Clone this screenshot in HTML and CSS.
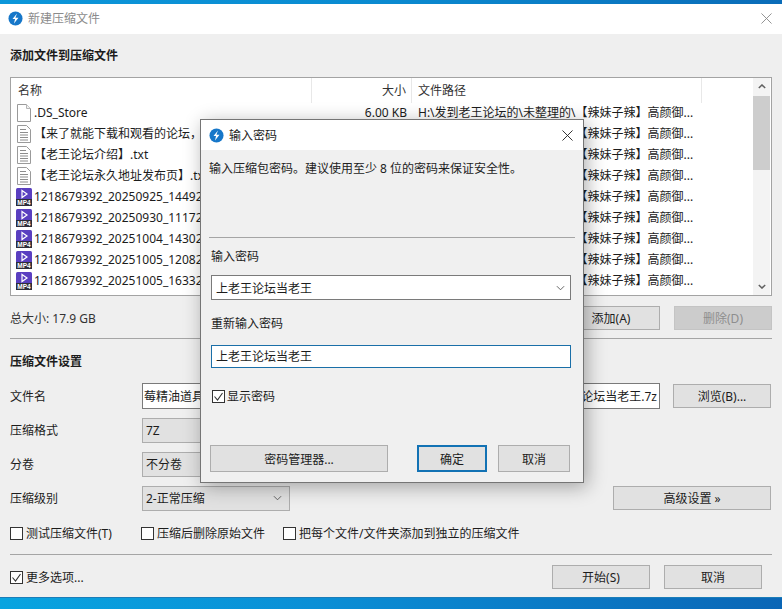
FILE: index.html
```html
<!DOCTYPE html>
<html lang="zh-CN">
<head>
<meta charset="utf-8">
<title>新建压缩文件</title>
<link rel="stylesheet" href="styles.css">
</head>
<body>
<svg class="defs" aria-hidden="true">
  <symbol id="logo" viewBox="0 0 16 16">
    <circle cx="8" cy="8" r="7.5" fill="#1677c9"/>
    <path d="M9.6 2.6 4.8 8.6h2.7l-1.1 4.8 4.8-6.1H7.9z" fill="#fff"/>
  </symbol>
  <symbol id="file" viewBox="0 0 14 18">
    <path d="M.5.5h9l4 4v13H.5z" fill="#fff" stroke="#9a9a9a"/>
    <path d="M9.5.5v4h4" fill="#f2f2f2" stroke="#b5b5b5"/>
  </symbol>
  <symbol id="txt" viewBox="0 0 14 18">
    <path d="M.5.5h9l4 4v13H.5z" fill="#fff" stroke="#9a9a9a"/>
    <path d="M3 4.5h6M3 7.5h8M3 10h8M3 12.500h8M3 15h8" stroke="#8d8d8d" fill="none"/>
  </symbol>
  <symbol id="mp4" viewBox="0 0 16 18">
    <rect width="16" height="12" rx="1.500" fill="#5a3fc0"/>
    <path d="M6 2.500 11 6 6 9.500z" fill="none" stroke="#fff" stroke-width="1.200"/>
    <rect y="11" width="16" height="7" fill="#2e2e3a"/>
    <text x="8" y="17" text-anchor="middle" class="mp4-label">MP4</text>
  </symbol>
  <symbol id="chev" viewBox="0 0 10 6">
    <path d="M1 1l4 4 4-4" fill="none" stroke="#555" stroke-width="1"/>
  </symbol>
</svg>

<div class="screen">
  <div class="desk-top"></div>
  <main class="window">
    <header class="titlebar">
      <svg class="logo"><use href="#logo"/></svg>
      <span class="title-main">新建压缩文件</span>
      <svg class="close close-main" viewBox="0 0 12 12"><path d="M.5.500l11 11M11.500.500l-11 11"/></svg>
    </header>
    <div class="content">
      <h2 class="heading h-add">添加文件到压缩文件</h2>
      <section class="list">
        <div class="list-main">
          <div class="list-head">
            <span class="col-name">名称</span>
            <span class="col-size">大小</span>
            <span class="col-path">文件路径</span>
            <span class="col-end"></span>
          </div>
          <div class="row"><span class="col-name"><svg class="ico"><use href="#file"/></svg>.DS_Store</span><span class="col-size">6.00 KB</span><span class="col-path">H:\发到老王论坛的\未整理的\【辣妹子辣】高颜御...</span></div>
          <div class="row"><span class="col-name"><svg class="ico"><use href="#txt"/></svg>【来了就能下载和观看的论坛，</span><span class="col-size"></span><span class="col-path">H:\发到老王论坛的\未整理的\【辣妹子辣】高颜御...</span></div>
          <div class="row"><span class="col-name"><svg class="ico"><use href="#txt"/></svg>【老王论坛介绍】.txt</span><span class="col-size"></span><span class="col-path">H:\发到老王论坛的\未整理的\【辣妹子辣】高颜御...</span></div>
          <div class="row"><span class="col-name"><svg class="ico"><use href="#txt"/></svg>【老王论坛永久地址发布页】.txt</span><span class="col-size"></span><span class="col-path">H:\发到老王论坛的\未整理的\【辣妹子辣】高颜御...</span></div>
          <div class="row"><span class="col-name"><svg class="ico"><use href="#mp4"/></svg>1218679392_20250925_144926</span><span class="col-size"></span><span class="col-path">H:\发到老王论坛的\未整理的\【辣妹子辣】高颜御...</span></div>
          <div class="row"><span class="col-name"><svg class="ico"><use href="#mp4"/></svg>1218679392_20250930_111726</span><span class="col-size"></span><span class="col-path">H:\发到老王论坛的\未整理的\【辣妹子辣】高颜御...</span></div>
          <div class="row"><span class="col-name"><svg class="ico"><use href="#mp4"/></svg>1218679392_20251004_143026</span><span class="col-size"></span><span class="col-path">H:\发到老王论坛的\未整理的\【辣妹子辣】高颜御...</span></div>
          <div class="row"><span class="col-name"><svg class="ico"><use href="#mp4"/></svg>1218679392_20251005_120826</span><span class="col-size"></span><span class="col-path">H:\发到老王论坛的\未整理的\【辣妹子辣】高颜御...</span></div>
          <div class="row"><span class="col-name"><svg class="ico"><use href="#mp4"/></svg>1218679392_20251005_163326</span><span class="col-size"></span><span class="col-path">H:\发到老王论坛的\未整理的\【辣妹子辣】高颜御...</span></div>
        </div>
        <div class="scrollbar">
          <svg class="sb-arrow" viewBox="0 0 10 6"><path d="M1 5l4-4 4 4"/></svg>
          <div class="sb-track"><div class="sb-thumb"></div></div>
          <svg class="sb-arrow" viewBox="0 0 10 6"><path d="M1 1l4 4 4-4"/></svg>
        </div>
      </section>

      <div class="total-row">
        <span class="total">总大小: 17.9 GB</span>
        <button class="btn btn-w">添加(A)</button>
        <button class="btn btn-w btn-off">删除(D)</button>
      </div>
      <hr class="rule rule-a">
      <h2 class="heading h-set">压缩文件设置</h2>

      <div class="form">
        <label class="f-label">文件名</label>
        <div class="namebox"><span class="name-left">莓精油道具</span><span class="name-right">论坛当老王.7z</span></div>
        <button class="btn btn-w">浏览(B)...</button>

        <label class="f-label">压缩格式</label>
        <div class="combo"><span>7Z</span><svg class="chev"><use href="#chev"/></svg></div>
        <span></span>

        <label class="f-label">分卷</label>
        <div class="combo"><span>不分卷</span><svg class="chev"><use href="#chev"/></svg></div>
        <span></span>

        <label class="f-label">压缩级别</label>
        <div class="level-row">
          <div class="combo"><span>2-正常压缩</span><svg class="chev"><use href="#chev"/></svg></div>
          <button class="btn btn-adv">高级设置 »</button>
        </div>
      </div>

      <div class="checks">
        <span class="check c1"><i class="box"></i>测试压缩文件(T)</span>
        <span class="check c2"><i class="box"></i>压缩后删除原始文件</span>
        <span class="check"><i class="box"></i>把每个文件/文件夹添加到独立的压缩文件</span>
      </div>
      <hr class="rule rule-b">
      <div class="foot">
        <span class="check"><i class="box"><svg viewBox="0 0 13 13"><path d="M2.500 6.500l3 3.500 5-7"/></svg></i>更多选项...</span>
        <div class="foot-btns">
          <button class="btn btn-w">开始(S)</button>
          <button class="btn btn-w">取消</button>
        </div>
      </div>
    </div>
  </main>
  <div class="desk-bottom"></div>

  <div class="dialog">
    <header class="d-title">
      <svg class="logo"><use href="#logo"/></svg>
      <span>输入密码</span>
      <svg class="close" viewBox="0 0 12 12"><path d="M.5.500l11 11M11.500.500l-11 11"/></svg>
    </header>
    <div class="d-body">
      <p class="d-note">输入压缩包密码。建议使用至少 8 位的密码来保证安全性。</p>
      <hr class="rule d-rule">
      <div class="d-fields">
        <label class="d-label">输入密码</label>
        <div class="d-combo"><span>上老王论坛当老王</span><svg class="chev"><use href="#chev"/></svg></div>
        <label class="d-label d-label2">重新输入密码</label>
        <div class="d-input">上老王论坛当老王</div>
        <span class="check d-check"><i class="box"><svg viewBox="0 0 13 13"><path d="M2.500 6.500l3 3.500 5-7"/></svg></i>显示密码</span>
      </div>
      <div class="d-btns">
        <button class="btn d-mgr">密码管理器...</button>
        <button class="btn d-ok">确定</button>
        <button class="btn d-cancel">取消</button>
      </div>
    </div>
  </div>
</div>
</body>
</html>
```
FILE: styles.css
```css
* { box-sizing: border-box; }
html, body { margin: 0; padding: 0; }
body {
  width: 782px;
  height: 609px;
  overflow: hidden;
  font-family: "Noto Sans", "Noto Sans CJK SC", sans-serif;
  font-size: 12px;
  color: #1c1c1c;
}
.defs { width: 0; height: 0; position: absolute; }
.mp4-label { font: bold 6.500px "Liberation Sans", sans-serif; fill: #fff; }
.screen { position: relative; width: 782px; height: 609px; display: flex; flex-direction: column; }
.desk-top { height: 4px; background: linear-gradient(90deg, #0c97da, #0a8ad0 50%, #0a6cb8); }
.desk-bottom { height: 12px; background: linear-gradient(90deg, #08a4e0, #0a8fd6 40%, #0a66b6); border-top: 1px solid #1b7db8; }
.window { height: 593px; background: #efefef; display: flex; flex-direction: column; }
.titlebar { height: 30px; flex: none; background: #fff; display: flex; align-items: center; padding: 0 10px 2px 8px; }
.logo { width: 15px; height: 15px; flex: none; }
.title-main { margin-left: 5px; color: #8b8b8b; }
.close { width: 11px; height: 11px; fill: none; stroke: #222; stroke-width: 1; margin-left: auto; }
.close-main { stroke: #8a8a8a; margin-right: 0; }
.content { flex: 1; padding: 0 10px; display: flex; flex-direction: column; }
.heading { margin: 0; font-size: 12px; font-weight: 700; line-height: 16px; }
.h-add { margin-top: 14px; }
.list { margin-top: 13px; height: 219px; flex: none; border: 1px solid #a3a3a3; background: #fff; display: flex; }
.list-main { flex: 1; min-width: 0; overflow: hidden; }
.list-head { height: 25px; display: flex; align-items: center; color: #333; }
.list-head .col-name { padding-left: 7px; height: 25px; line-height: 25px; border-right: 1px solid #e8e8e8; }
.list-head .col-size { height: 25px; line-height: 25px; border-right: 1px solid #e8e8e8; }
.list-head .col-path { height: 25px; line-height: 25px; border-right: 1px solid #e8e8e8; }
.col-name { width: 301px; flex: none; display: flex; align-items: center; white-space: nowrap; overflow: hidden; padding-left: 5px; }
.col-size { width: 100px; flex: none; text-align: right; padding-right: 5px; }
.col-path { width: 290px; flex: none; padding-left: 6px; white-space: nowrap; overflow: hidden; }
.col-end { flex: 1; }
.row { height: 20.9px; display: flex; align-items: center; line-height: 20px; }
.ico { width: 16px; height: 18px; flex: none; margin-right: 2px; }
.scrollbar { width: 17px; flex: none; margin-right: 1px; background: #f3f3f3; display: flex; flex-direction: column; }
.sb-arrow { width: 8px; height: 5px; flex: none; margin: 6px auto; fill: none; stroke: #606060; stroke-width: 1.800; }
.sb-track { flex: 1; padding-top: 1px; }
.sb-thumb { height: 74px; background: #cdcdcd; }
.total-row { margin-top: 9px; height: 25px; display: flex; align-items: center; gap: 14px; flex: none; }
.total { margin-right: auto; color: #333; }
.btn {
  font: inherit;
  color: #1c1c1c;
  background: #e1e1e1;
  border: 1px solid #adadad;
  padding: 0;
  height: 24px;
}
.btn-w { width: 98px; }
.btn-off { background: #cccccc; color: #8e8e8e; border-color: #c4c4c4; }
.rule { width: 100%; margin: 0; border: 0; height: 1px; background: #a5a5a5; flex: none; }
.rule-a { margin-top: 8px; }
.h-set { margin-top: 15px; }
.form {
  margin-top: 13px;
  display: grid;
  grid-template-columns: 132px 518px 98px;
  column-gap: 0;
  grid-auto-rows: 26px;
  row-gap: 8px;
  align-items: center;
  flex: none;
}
.form > .btn { margin-left: 13px; }
.f-label { color: #1c1c1c; }
.namebox {
  height: 26px;
  border: 1px solid #7a7a7a;
  background: #fff;
  display: flex;
  justify-content: space-between;
  align-items: center;
  overflow: hidden;
  padding: 0 2px;
}
.name-left { margin-left: -1px; }
.combo {
  width: 148px;
  height: 25px;
  background: #e1e1e1;
  border: 1px solid #adadad;
  display: flex;
  align-items: center;
  justify-content: space-between;
  padding: 0 7px 0 3px;
}
.chev { width: 9px; height: 6px; flex: none; }
.level-row { grid-column: 2 / 4; display: flex; justify-content: space-between; align-items: center; width: 629px; }
.btn-adv { width: 158px; }
.checks { margin-top: 12px; display: flex; align-items: center; height: 20px; flex: none; }
.check { display: inline-flex; align-items: center; gap: 3px; }
.c1 { width: 131px; }
.c2 { width: 142px; }
.box {
  width: 13px;
  height: 13px;
  background: #fff;
  border: 1px solid #333;
  flex: none;
  display: block;
  position: relative;
}
.box svg { width: 13px; height: 13px; display: block; margin: -1px; fill: none; stroke: #333; stroke-width: 1.100; }
.rule-b { margin-top: 11px; }
.foot { margin-top: 10px; display: flex; align-items: center; justify-content: space-between; height: 24px; flex: none; padding-right: 10px; }
.foot-btns { display: flex; gap: 14px; }

.dialog {
  position: absolute;
  left: 200px;
  top: 119px;
  width: 384px;
  height: 364px;
  background: #f0f0f0;
  border: 1px solid #757575;
  box-shadow: 3px 4px 18px rgba(0, 0, 0, .32);
  display: flex;
  flex-direction: column;
}
.d-title { height: 30px; flex: none; background: #fff; display: flex; align-items: center; gap: 5px; padding: 0 10px 0 8px; color: #222; }
.d-title .logo { width: 15px; height: 15px; }
.d-body { flex: 1; padding: 0 8px; display: flex; flex-direction: column; }
.d-note { margin: 11px 0 0; line-height: 16px; color: #222; }
.d-rule { margin-top: 60px; }
.d-fields { padding: 0 0 0 2px; display: flex; flex-direction: column; align-items: flex-start; }
.d-label { margin-top: 11px; line-height: 16px; }
.d-combo {
  margin-top: 10px;
  width: 360px;
  height: 25px;
  background: #fff;
  border: 1px solid #7a7a7a;
  display: flex;
  align-items: center;
  justify-content: space-between;
  padding: 0 5px 0 4px;
}
.d-label2 { margin-top: 16px; }
.d-input {
  margin-top: 13px;
  width: 360px;
  height: 23px;
  line-height: 21px;
  background: #fff;
  border: 1px solid #1a6fa8;
  padding: 0 4px;
}
.d-check { margin-top: 19px; margin-left: 1px; gap: 2px; }
.d-btns { margin-top: 40px; display: flex; align-items: center; padding-left: 1px; }
.d-mgr { width: 178px; height: 27px; }
.d-ok { width: 70px; height: 27px; margin-left: 29px; border: 2px solid #1272b4; }
.d-cancel { width: 72px; height: 27px; margin-left: 11px; }
```
